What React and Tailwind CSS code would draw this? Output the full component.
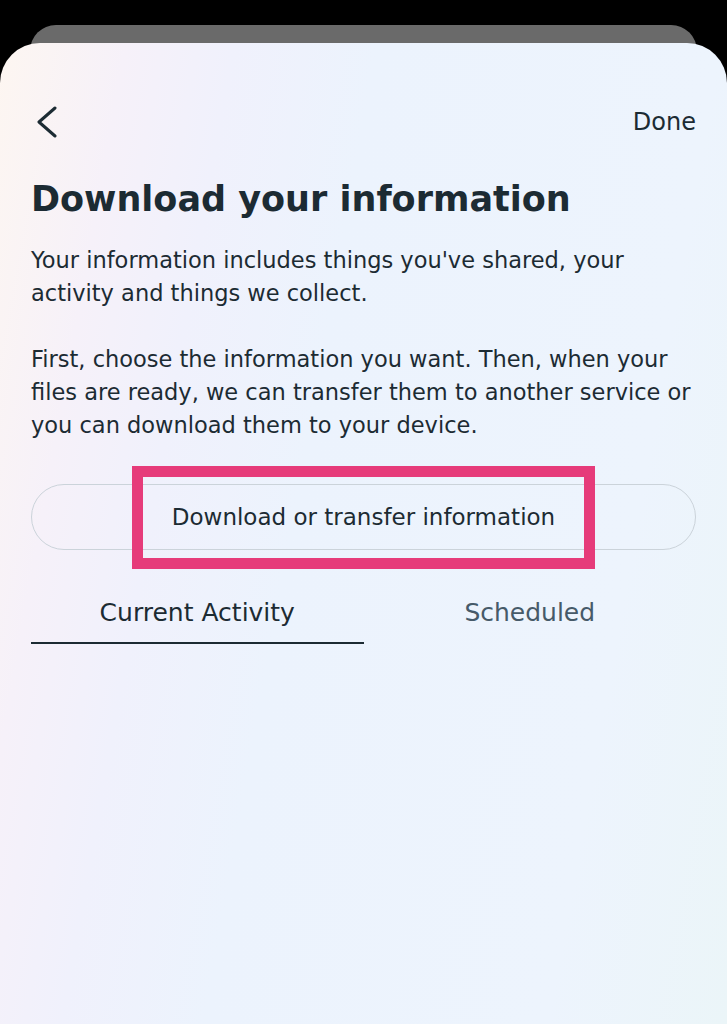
export default function App() {
  return (
    <div className="h-[1024px] bg-black pt-[25px] overflow-hidden" style={{ fontFamily: '"DejaVu Sans", sans-serif' }}>
      <div className="mx-[30px] h-[44px] rounded-t-[26px] bg-[#6a6a6a]" />
      <div className="relative -mt-[26px] h-[981px] rounded-t-[40px] bg-[linear-gradient(100deg,#fdf6f1_0%,#f6f1f9_14%,#f0f1fc_26%,#ecf3fd_42%,#edf4fd_80%,#ebf5f8_100%)] px-[31px] text-[#1c2b33]">
        <div className="flex items-center justify-between pt-[61px]">
          <svg width="24" height="32" viewBox="0 0 24 32" className="ml-[4px]" fill="none">
            <path d="M20 2 L4 16 L20 30" stroke="#1c2b33" strokeWidth="3" strokeLinecap="round" strokeLinejoin="round" />
          </svg>
          <span className="text-[24px]">Done</span>
        </div>
        <h1 className="mt-[37px] text-[35px] font-bold leading-[44px]">Download your information</h1>
        <div className="mt-[23px] text-[22.5px] leading-[33px]">
          <p>Your information includes things you've shared, your activity and things we collect.</p>
          <p className="mt-[33px]">First, choose the information you want. Then, when your files are ready, we can transfer them to another service or you can download them to your device.</p>
        </div>
        <div className="relative mt-[42px] flex h-[66px] items-center justify-center rounded-full border-[1.5px] border-[#cbd3da] text-[23px]">
          Download or transfer information
          <div className="absolute left-[100px] right-[100px] -top-[19px] -bottom-[20px] border-[11px] border-[#e63b7a]" />
        </div>
        <div className="mt-[44px] grid grid-cols-2 text-[25px]">
          <div className="flex h-[50px] items-start justify-center border-b-2 border-[#1c2b33]">Current Activity</div>
          <div className="flex h-[50px] items-start justify-center text-[#465a69]">Scheduled</div>
        </div>
      </div>
    </div>
  );
}
